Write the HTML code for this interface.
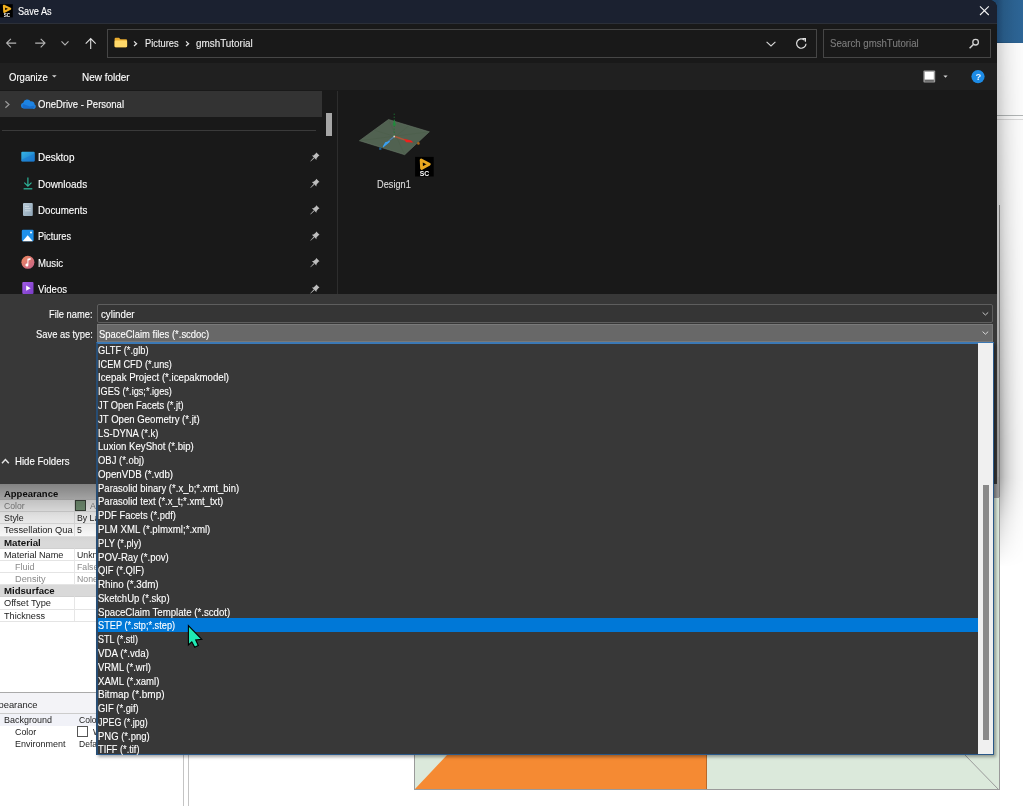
<!DOCTYPE html>
<html lang="en">
<head>
<meta charset="utf-8">
<title>Save As</title>
<style>
html,body{margin:0;padding:0;}
body{width:1023px;height:806px;position:relative;overflow:hidden;background:#fff;font-family:"Liberation Sans",sans-serif;font-size:11px;color:#fff;}
#wrap{position:absolute;left:0;top:0;width:1023px;height:806px;overflow:hidden;filter:blur(.45px);}
.abs{position:absolute;}
.t{position:absolute;white-space:nowrap;line-height:14px;transform-origin:0 0;display:block;-webkit-text-stroke:.12px currentColor;}
/* background app */
#bgblue{left:980px;top:0;width:43px;height:43px;background:linear-gradient(90deg,#1f4870 0%,#1f4870 40%,#275984 55%,#2b6190 80%,#2d6596 100%);}
#bgshadow{left:997px;top:42px;width:26px;height:525px;background:linear-gradient(90deg,rgba(0,0,0,.40) 0%,rgba(0,0,0,.34) 12%,rgba(0,0,0,.22) 30%,rgba(0,0,0,.13) 52%,rgba(0,0,0,.065) 75%,rgba(0,0,0,.03) 100%);-webkit-mask-image:linear-gradient(180deg,rgba(0,0,0,.42) 0%,rgba(0,0,0,.62) 35%,#000 76%,#000 83%,rgba(0,0,0,.45) 91%,transparent 100%);mask-image:linear-gradient(180deg,rgba(0,0,0,.42) 0%,rgba(0,0,0,.62) 35%,#000 76%,#000 83%,rgba(0,0,0,.45) 91%,transparent 100%);}
#bgshadowfade{left:997px;top:115px;width:26px;height:1px;background:#b4b8b8;box-shadow:0 4px 0 #dcdcdc;}
#appline{left:999px;top:205px;width:1px;height:292px;background:#7a7a7a;}
#appstrip{left:994px;top:477px;width:5px;height:20px;background:#9a9a9a;}
#dlgshadow{left:0;top:484px;width:190px;height:58px;background:linear-gradient(180deg,rgba(0,0,0,.40) 0%,rgba(0,0,0,.24) 28%,rgba(0,0,0,.12) 55%,rgba(0,0,0,0) 100%);}
/* properties panel */
.prow{position:absolute;left:0;width:186px;height:12px;border-bottom:1px solid #e4e4e4;box-sizing:border-box;background:#fff;}
.prow.h{background:#d9d9d9;border-bottom:1px solid #d0d0d0;}
.pt{position:absolute;white-space:nowrap;font-size:9.6px;line-height:12px;color:#1a1a1a;}
.pt.b{font-weight:bold;color:#111;}
.pt.g{color:#8c8c8c;}
/* dialog */
#dlg{left:0;top:0;width:997px;height:484px;background:#191919;border-top-right-radius:8px;}
#title{left:0;top:0;width:997px;height:23px;background:#1b2130;border-top-right-radius:8px;}
#navbar{left:0;top:23px;width:997px;height:40px;background:#191919;border-top:1px solid #2b2f38;box-sizing:border-box;}
#toolbar{left:0;top:63px;width:997px;height:27px;background:#202020;}
#addr{left:107px;top:28.5px;width:710px;height:29px;border:1px solid #464646;box-sizing:border-box;}
#search{left:823px;top:28.5px;width:168px;height:29px;border:1px solid #464646;box-sizing:border-box;}
#odrow{left:0;top:91px;width:322px;height:26px;background:#333;}
#navsep{left:2px;top:130px;width:314px;height:1px;background:#3a3a3a;}
#thumb1{left:326px;top:113px;width:6px;height:23px;background:#a6a6a6;}
#vdiv{left:337px;top:91px;width:1px;height:203px;background:#2d2d2d;}
#bottom{left:0;top:294px;width:997px;height:190px;background:#383838;}
#fname{left:97px;top:304px;width:896px;height:19px;border:1px solid #5e5e5e;border-radius:2px;box-sizing:border-box;background:#353535;}
#ftype{left:97px;top:324px;width:896px;height:18px;border:1px solid #7a7a7a;box-sizing:border-box;background:#686868;}
#dd{left:96px;top:341.5px;width:898px;height:413.5px;background:#383838;border:1px solid #2a5888;border-left:2px solid #274d74;border-top:2px solid #3b78b4;box-sizing:border-box;box-shadow:2px 2px 3px rgba(0,0,0,.35);}
#ddtrack{left:978px;top:343px;width:15px;height:411px;background:#f0f0f0;}
#ddthumb{left:983px;top:485px;width:6px;height:255px;background:#8a8a8a;}
#sel{left:98px;top:618px;width:880px;height:14px;background:#0078d7;}
.li{position:absolute;left:98px;white-space:nowrap;font-size:10.4px;line-height:14px;color:#fff;letter-spacing:-0.1px;}
.nv{position:absolute;left:37.5px;white-space:nowrap;font-size:10.6px;line-height:14px;color:#fff;}
</style>
</head>
<body>
<div id="wrap">
<!-- ===== background application ===== -->
<div class="abs" id="bgblue"></div>
<div class="abs" id="bgshadowfade"></div>
<div class="abs" id="bgshadow"></div>
<div class="abs" id="appline"></div>
<div class="abs" id="appstrip"></div>
<svg class="abs" style="left:0;top:0" width="1023" height="806" viewBox="0 0 1023 806">
<rect x="414.5" y="497.5" width="585" height="292" fill="#dbe9db" stroke="#9a9a9a" stroke-width="1"/>
<polygon points="447,755 706.5,755 706.5,789 415,789" fill="#f58a33"/>
<line x1="706.5" y1="755" x2="706.5" y2="789" stroke="#b9692a" stroke-width="1"/>
<line x1="965" y1="755" x2="999" y2="790" stroke="#9a9a9a" stroke-width="1"/>
<rect x="183" y="484" width="1" height="322" fill="#c4c4c4"/>
<rect x="188" y="484" width="1" height="322" fill="#c4c4c4"/>
</svg>


<div class="abs" style="left:0;top:484px;width:186px;height:137px;background:#fff"></div>
<div class="prow h" style="top:484px;height:16px"></div>
<div class="prow " style="top:500px;height:12px"></div>
<div class="prow " style="top:512px;height:12px"></div>
<div class="prow " style="top:524px;height:13px"></div>
<div class="prow h" style="top:537px;height:12px"></div>
<div class="prow " style="top:549px;height:12px"></div>
<div class="prow " style="top:561px;height:12px"></div>
<div class="prow " style="top:573px;height:12px"></div>
<div class="prow h" style="top:585px;height:12px"></div>
<div class="prow " style="top:597px;height:13px"></div>
<div class="prow " style="top:610px;height:12px"></div>
<div class="abs" style="left:74px;top:500px;width:1px;height:121px;background:#e6e6e6"></div>
<div class="abs" style="left:74px;top:488px;width:1px;height:12px;background:#d9d9d9"></div>
<div class="abs" style="left:74px;top:537px;width:1px;height:12px;background:#d9d9d9"></div>
<div class="abs" style="left:74px;top:585px;width:1px;height:12px;background:#d9d9d9"></div>
<div class="abs" style="left:75px;top:500px;width:11px;height:11px;box-sizing:border-box;border:1px solid #3c463c;background:#7b9b7c"></div>
<div class="abs" style="left:0;top:692px;width:184px;height:1px;background:#aaa"></div>
<div class="abs" style="left:0;top:693px;width:184px;height:20px;background:#f3f3f7"></div>
<div class="abs" style="left:0;top:713px;width:184px;height:1px;background:#ccc"></div>
<div class="abs" style="left:0;top:714px;width:184px;height:12px;background:#f1f2f8"></div>
<div class="abs" style="left:77px;top:726px;width:11px;height:11px;box-sizing:border-box;border:1px solid #555;background:#fff"></div>
<span class="t" style="left:4.0px;top:487.01px;font-size:9.2px;color:#111;transform:scaleX(1.0302);font-weight:bold;-webkit-text-stroke:0;">Appearance</span>
<span class="t" style="left:4.0px;top:499.16px;font-size:9.2px;color:#8a8a8a;transform:scaleX(0.9422);-webkit-text-stroke:0;">Color</span>
<span class="t" style="left:4.0px;top:511.31px;font-size:9.2px;color:#1c1c1c;transform:scaleX(0.9688);-webkit-text-stroke:0;">Style</span>
<span class="t" style="left:4.0px;top:523.46px;font-size:9.2px;color:#1c1c1c;transform:scaleX(1.0112);-webkit-text-stroke:0;">Tessellation Qua</span>
<span class="t" style="left:4.0px;top:535.61px;font-size:9.2px;color:#111;transform:scaleX(1.0595);font-weight:bold;-webkit-text-stroke:0;">Material</span>
<span class="t" style="left:4.0px;top:547.76px;font-size:9.2px;color:#1c1c1c;transform:scaleX(0.9941);-webkit-text-stroke:0;">Material Name</span>
<span class="t" style="left:15.4px;top:559.91px;font-size:9.2px;color:#8a8a8a;transform:scaleX(0.9838);-webkit-text-stroke:0;">Fluid</span>
<span class="t" style="left:15.4px;top:572.06px;font-size:9.2px;color:#8a8a8a;transform:scaleX(1.0019);-webkit-text-stroke:0;">Density</span>
<span class="t" style="left:4.0px;top:584.21px;font-size:9.2px;color:#111;transform:scaleX(1.0450);font-weight:bold;-webkit-text-stroke:0;">Midsurface</span>
<span class="t" style="left:4.0px;top:596.36px;font-size:9.2px;color:#1c1c1c;transform:scaleX(1.0074);-webkit-text-stroke:0;">Offset Type</span>
<span class="t" style="left:4.0px;top:608.51px;font-size:9.2px;color:#1c1c1c;transform:scaleX(0.9913);-webkit-text-stroke:0;">Thickness</span>
<span class="t" style="left:90.0px;top:499.16px;font-size:9.2px;color:#8a8a8a;transform:scaleX(0.9500);-webkit-text-stroke:0;">Automatic</span>
<span class="t" style="left:76.5px;top:511.31px;font-size:9.2px;color:#1c1c1c;transform:scaleX(0.9500);-webkit-text-stroke:0;">By Layer</span>
<span class="t" style="left:76.5px;top:523.46px;font-size:9.2px;color:#1c1c1c;transform:scaleX(0.9500);-webkit-text-stroke:0;">5</span>
<span class="t" style="left:76.5px;top:547.76px;font-size:9.2px;color:#1c1c1c;transform:scaleX(0.9500);-webkit-text-stroke:0;">Unknown Material</span>
<span class="t" style="left:76.5px;top:559.91px;font-size:9.2px;color:#8a8a8a;transform:scaleX(0.9500);-webkit-text-stroke:0;">False</span>
<span class="t" style="left:76.5px;top:572.06px;font-size:9.2px;color:#8a8a8a;transform:scaleX(0.9500);-webkit-text-stroke:0;">None</span>
<span class="t" style="left:-13.0px;top:698.21px;font-size:9.2px;color:#222;transform:scaleX(1.0200);-webkit-text-stroke:0;">Appearance</span>
<span class="t" style="left:3.6px;top:713.01px;font-size:9.2px;color:#222;transform:scaleX(0.9766);-webkit-text-stroke:0;">Background</span>
<span class="t" style="left:14.8px;top:725.01px;font-size:9.2px;color:#222;transform:scaleX(0.9650);-webkit-text-stroke:0;">Color</span>
<span class="t" style="left:14.8px;top:737.11px;font-size:9.2px;color:#222;transform:scaleX(0.9791);-webkit-text-stroke:0;">Environment</span>
<span class="t" style="left:78.5px;top:713.01px;font-size:9.2px;color:#222;transform:scaleX(0.9300);-webkit-text-stroke:0;">Color</span>
<span class="t" style="left:92.5px;top:725.01px;font-size:9.2px;color:#222;transform:scaleX(0.9300);-webkit-text-stroke:0;">White</span>
<span class="t" style="left:78.5px;top:737.11px;font-size:9.2px;color:#222;transform:scaleX(0.9300);-webkit-text-stroke:0;">Default</span>
<div class="abs" id="dlgshadow"></div>
<!-- ===== dialog ===== -->
<div class="abs" id="dlg"></div>
<div class="abs" id="title"></div>
<div class="abs" id="navbar"></div>
<div class="abs" id="toolbar"></div>
<div class="abs" id="addr"></div>
<div class="abs" id="search"></div>
<svg class="abs" style="left:0;top:0" width="1000" height="92" viewBox="0 0 1000 92" fill="none">
<!-- app logo -->
<rect x="0" y="4.2" width="12.8" height="13.2" fill="#000"/>
<path d="M3.9 5.7 L10.2 8.8 L4.3 11.9 Z" stroke="#f2b01e" stroke-width="2.1" stroke-linejoin="round" fill="#000"/>
<text x="3.8" y="17.4" font-family="Liberation Sans, sans-serif" font-weight="bold" font-size="5.6" fill="#fff" textLength="6.4" lengthAdjust="spacingAndGlyphs">SC</text>
<!-- close -->
<path d="M980 6.4 L988.8 15 M988.8 6.4 L980 15" stroke="#f2f2f2" stroke-width="1.1"/>
<!-- back -->
<path d="M16.2 43.1 H6.6 M10.9 38.9 L6.6 43.1 L10.9 47.4" stroke="#b4b4b4" stroke-width="1.1"/>
<!-- forward -->
<path d="M35.2 43.1 H45 M40.7 38.9 L45 43.1 L40.7 47.4" stroke="#b4b4b4" stroke-width="1.1"/>
<!-- recent chevron -->
<path d="M61.5 41.3 L65 44.9 L68.5 41.3" stroke="#b4b4b4" stroke-width="1.1"/>
<!-- up -->
<path d="M90.7 49 V38.6 M85.7 43.6 L90.7 38.6 L95.7 43.6" stroke="#e0e0e0" stroke-width="1.1"/>
<!-- folder -->
<path d="M114.6 39 q0-1.2 1.2-1.2 h3.2 l1.4 1.4 h5.6 q1.1 0 1.1 1.1 v5.9 q0 1.1-1.1 1.1 h-10.2 q-1.2 0-1.2-1.1z" fill="#e9ab2e"/>
<path d="M114.6 41.4 q0-1 1-1 h10.5 q1 0 1 1 v4.8 q0 1.1-1.1 1.1 h-10.2 q-1.2 0-1.2-1.1z" fill="#ffd96a"/>
<!-- breadcrumb chevrons -->
<path d="M134 41.4 L136.6 43.7 L134 46" stroke="#e6e6e6" stroke-width="1.2"/>
<path d="M186 41.4 L188.6 43.7 L186 46" stroke="#e6e6e6" stroke-width="1.2"/>
<!-- address dropdown chevron -->
<path d="M766.6 41.8 L771 46 L775.4 41.8" stroke="#d8d8d8" stroke-width="1.1"/>
<!-- refresh -->
<path d="M804.6 40.2 A4.7 4.7 0 1 0 806 43.7" stroke="#e0e0e0" stroke-width="1.2"/>
<path d="M802.3 38.6 H805.4 V41.7" stroke="#e0e0e0" stroke-width="1.2"/>
<!-- search magnifier -->
<circle cx="975.6" cy="42.2" r="2.8" stroke="#d0d0d0" stroke-width="1.3"/>
<path d="M973.6 44.3 L969.6 48.3" stroke="#d0d0d0" stroke-width="1.5"/>
<!-- organize caret -->
<path d="M52 75.2 H56.6 L54.3 77.6 Z" fill="#d6d6d6"/>
<!-- view icon -->
<rect x="923.4" y="70.4" width="11.8" height="12.2" rx="1" fill="#9b9b9b"/>
<rect x="924.8" y="71.8" width="9" height="7.6" fill="#fff"/>
<rect x="924.8" y="80.4" width="9" height="1" fill="#4a4a4a"/>
<path d="M943.4 75.6 H947.6 L945.5 77.8 Z" fill="#d6d6d6"/>
<!-- help -->
<circle cx="978" cy="76.6" r="6.6" fill="#1c8be6"/>
<text x="975.6" y="80.2" font-family="Liberation Sans, sans-serif" font-weight="bold" font-size="9.5" fill="#e9f4ff">?</text>
</svg>

<span class="t" style="left:17.9px;top:4.26px;font-size:10.8px;color:#fff;transform:scaleX(0.8479);">Save As</span>
<span class="t" style="left:8.8px;top:69.86px;font-size:10.8px;color:#fff;transform:scaleX(0.8833);">Organize</span>
<span class="t" style="left:81.5px;top:69.86px;font-size:10.8px;color:#fff;transform:scaleX(0.9204);">New folder</span>
<span class="t" style="left:144.5px;top:35.86px;font-size:10.8px;color:#ececec;transform:scaleX(0.8612);">Pictures</span>
<span class="t" style="left:196.4px;top:35.86px;font-size:10.8px;color:#ececec;transform:scaleX(0.9159);">gmshTutorial</span>
<span class="t" style="left:829.9px;top:36.46px;font-size:10.8px;color:#7d7d7d;transform:scaleX(0.8940);">Search gmshTutorial</span>
<div class="abs" id="odrow"></div>
<div class="abs" id="navsep"></div>
<div class="abs" id="thumb1"></div>
<div class="abs" id="vdiv"></div>
<svg class="abs" style="left:0;top:91px" width="338" height="203" viewBox="0 91 338 203" fill="none">
<!-- expand chevron -->
<path d="M5.4 101.2 L9 104.5 L5.4 107.8" stroke="#9a9a9a" stroke-width="1.2"/>
<!-- onedrive cloud -->
<path d="M23.6 108.6 a3 3 0 0 1 -0.4 -5.9 a4.2 4.2 0 0 1 7.6 -1.3 a3.2 3.2 0 0 1 3.8 3.2 a2.2 2.2 0 0 1 -2 4 z" fill="#1d84e4"/>
<path d="M24 108.6 a2.8 2.8 0 0 1 -0.6 -4.6 l6.4 2.6 l4.4 -1 a2.2 2.2 0 0 1 -1.6 3 z" fill="#1669c9" opacity=".8"/>
<!-- desktop -->
<defs><linearGradient id="gd" x1="0" y1="0" x2="1" y2="1"><stop offset="0" stop-color="#35b5e6"/><stop offset="1" stop-color="#1a74c8"/></linearGradient>
<linearGradient id="gdoc" x1="0" y1="0" x2="1" y2="1"><stop offset="0" stop-color="#b9cad6"/><stop offset="1" stop-color="#8fa6b8"/></linearGradient>
<linearGradient id="gmu" x1="0" y1="0" x2="1" y2="1"><stop offset="0" stop-color="#ee8a5e"/><stop offset="1" stop-color="#c6628a"/></linearGradient>
<linearGradient id="gvi" x1="0" y1="0" x2="1" y2="1"><stop offset="0" stop-color="#a25ce6"/><stop offset="1" stop-color="#7a3cc8"/></linearGradient></defs>
<rect x="21.3" y="151.8" width="13.4" height="9.8" rx="1" fill="url(#gd)"/>
<path d="M22 159.6 L34.7 153.4 V160.6 q0 1 -1 1 H22.3 q-1 0 -1 -1z" fill="#1a78cf" opacity=".55"/>
<!-- downloads -->
<path d="M27.9 177.4 V186 M24.3 182.6 L27.9 186.1 L31.5 182.6" stroke="#2db398" stroke-width="1.2"/>
<path d="M23.6 188.8 H32.3" stroke="#2db398" stroke-width="1.3"/>
<!-- documents -->
<rect x="23" y="203" width="9.8" height="13" rx="1" fill="url(#gdoc)"/>
<path d="M25 206.4 H29 M25 208.6 H30.6 M25 210.8 H30.6" stroke="#dfe8ee" stroke-width=".8" opacity=".8"/>
<!-- pictures -->
<rect x="21.8" y="229.8" width="11.8" height="11.4" rx="1.2" fill="#1e90ea"/>
<path d="M22.6 241.2 L27.7 235.2 L32.8 241.2 Z" fill="#fff"/>
<circle cx="31" cy="232.4" r="1" fill="#fff"/>
<!-- music -->
<circle cx="27.9" cy="262.3" r="6.5" fill="url(#gmu)"/>
<path d="M27.4 265 V258.8 L30.6 258 V259.8 L28.4 260.4 V265 a1.5 1.5 0 1 1 -1 -1.4" fill="#fff"/>
<!-- videos -->
<rect x="22.3" y="282" width="11.2" height="12" rx="1" fill="url(#gvi)"/>
<path d="M26.2 285.6 L30.6 288.2 L26.2 290.8 Z" fill="#fff"/>
<!-- pins -->
<g id="pin" fill="#bdbdbd"><path d="M316.3 152.4 L319.5 155.6 L318.3 156.2 L316.5 158.4 L316.4 160 L311.9 155.5 L313.5 155.4 L315.7 153.6 Z"/><path d="M313.6 157.6 L314.3 158.3 L310.6 161.6 L310.3 161.3 Z"/></g>
<use href="#pin" y="26.4"/><use href="#pin" y="52.8"/><use href="#pin" y="79.2"/><use href="#pin" y="105.6"/><use href="#pin" y="132"/>
</svg>

<span class="t" style="left:37.5px;top:97.06px;font-size:10.8px;color:#fff;transform:scaleX(0.8792);">OneDrive - Personal</span>
<span class="t" style="left:37.7px;top:150.26px;font-size:10.8px;color:#fff;transform:scaleX(0.9190);">Desktop</span>
<span class="t" style="left:37.7px;top:176.66px;font-size:10.8px;color:#fff;transform:scaleX(0.9191);">Downloads</span>
<span class="t" style="left:37.7px;top:203.06px;font-size:10.8px;color:#fff;transform:scaleX(0.9028);">Documents</span>
<span class="t" style="left:37.7px;top:229.46px;font-size:10.8px;color:#fff;transform:scaleX(0.8458);">Pictures</span>
<span class="t" style="left:37.7px;top:255.86px;font-size:10.8px;color:#fff;transform:scaleX(0.8900);">Music</span>
<span class="t" style="left:37.7px;top:282.26px;font-size:10.8px;color:#fff;transform:scaleX(0.8834);">Videos</span>
<svg class="abs" style="left:350px;top:105px" width="90" height="75" viewBox="350 105 90 75" fill="none">
<polygon points="359.5,140.7 388.5,119.5 429.3,131.8 404.7,154.7" fill="#516251" stroke="#667566" stroke-width=".6"/>
<path d="M359.5 140.7 L429.3 131.8 M388.5 119.5 L404.7 154.7 M374 130.1 L417 143.2 M408.9 125.6 L382.1 147.7" stroke="#4b5e4a" stroke-width=".6"/>
<!-- green axis -->
<path d="M394.2 136 V112" stroke="#1d7a34" stroke-width=".8" stroke-dasharray="1.4 1.6"/>
<path d="M394.3 119.4 L396 125.6 H392.6 Z" fill="#1f8c3b"/>
<!-- red axis -->
<path d="M395 136.6 L405 140" stroke="#a8563a" stroke-width="1.6"/>
<path d="M404 138.8 L411.2 140.4 L413.4 142.6 L406 142.2 Z" fill="#f0201c"/>
<!-- blue axis -->
<path d="M393.6 137 L388 141.6" stroke="#4f7fb0" stroke-width="1.2"/>
<path d="M389.4 141.6 L383.4 146.6 L385.6 142.8 Z" fill="#3aa0f4" stroke="#3aa0f4" stroke-width="1.2" stroke-linejoin="round"/>
<rect x="379.2" y="147.4" width="2.2" height="2.4" fill="#1f5f8f"/>
<circle cx="418.4" cy="143.4" r="1.3" fill="#a8661c"/>
<circle cx="394.2" cy="136.5" r=".9" fill="#d8d8c8"/>
<!-- SC badge -->
<rect x="415.1" y="156.9" width="18.6" height="19.6" fill="#000"/>
<path d="M421.2 160 L429.3 164.2 L421.6 168.4 Z" stroke="#e9a820" stroke-width="2.9" stroke-linejoin="round" fill="#000"/>
<text x="419.8" y="176" font-family="Liberation Sans, sans-serif" font-weight="bold" font-size="6.8" fill="#fff" textLength="9.4" lengthAdjust="spacingAndGlyphs">SC</text>
</svg>

<span class="t" style="left:377.4px;top:176.66px;font-size:10.8px;color:#dcdcdc;transform:scaleX(0.8530);">Design1</span>
<div class="abs" id="bottom"></div>
<div class="abs" id="fname"></div>
<div class="abs" id="ftype"></div>
<svg class="abs" style="left:0;top:294px" width="997" height="190" viewBox="0 294 997 190" fill="none">
<path d="M982.6 312.4 L985.4 315 L988.2 312.4" stroke="#c8c8c8" stroke-width="1"/>
<path d="M982.6 331.6 L985.4 334.2 L988.2 331.6" stroke="#d8d8d8" stroke-width="1"/>
<path d="M2 463.2 L5.4 459.6 L8.8 463.2" stroke="#e4e4e4" stroke-width="1.5"/>
</svg>

<span class="t" style="left:49.0px;top:306.76px;font-size:10.8px;color:#fff;transform:scaleX(0.8630);">File name:</span>
<span class="t" style="left:35.7px;top:326.86px;font-size:10.8px;color:#fff;transform:scaleX(0.8682);">Save as type:</span>
<span class="t" style="left:101.0px;top:306.76px;font-size:10.8px;color:#fff;transform:scaleX(0.9028);">cylinder</span>
<span class="t" style="left:99.0px;top:326.86px;font-size:10.8px;color:#fff;transform:scaleX(0.8745);">SpaceClaim files (*.scdoc)</span>
<span class="t" style="left:14.5px;top:454.06px;font-size:10.8px;color:#fff;transform:scaleX(0.8919);">Hide Folders</span>
<div class="abs" id="dd"></div>
<div class="abs" id="ddtrack"></div>
<div class="abs" id="ddthumb"></div>
<div class="abs" id="sel"></div>

<span class="t" style="left:98.1px;top:342.86px;font-size:10.8px;color:#fff;transform:scaleX(0.8619);">GLTF (*.glb)</span>
<span class="t" style="left:98.1px;top:356.64px;font-size:10.8px;color:#fff;transform:scaleX(0.8496);">ICEM CFD (*.uns)</span>
<span class="t" style="left:98.1px;top:370.42px;font-size:10.8px;color:#fff;transform:scaleX(0.8946);">Icepak Project (*.icepakmodel)</span>
<span class="t" style="left:98.1px;top:384.20px;font-size:10.8px;color:#fff;transform:scaleX(0.8493);">IGES (*.igs;*.iges)</span>
<span class="t" style="left:98.1px;top:397.98px;font-size:10.8px;color:#fff;transform:scaleX(0.8621);">JT Open Facets (*.jt)</span>
<span class="t" style="left:98.1px;top:411.76px;font-size:10.8px;color:#fff;transform:scaleX(0.8889);">JT Open Geometry (*.jt)</span>
<span class="t" style="left:98.1px;top:425.54px;font-size:10.8px;color:#fff;transform:scaleX(0.8739);">LS-DYNA (*.k)</span>
<span class="t" style="left:98.1px;top:439.32px;font-size:10.8px;color:#fff;transform:scaleX(0.8917);">Luxion KeyShot (*.bip)</span>
<span class="t" style="left:98.1px;top:453.10px;font-size:10.8px;color:#fff;transform:scaleX(0.8748);">OBJ (*.obj)</span>
<span class="t" style="left:98.1px;top:466.88px;font-size:10.8px;color:#fff;transform:scaleX(0.9002);">OpenVDB (*.vdb)</span>
<span class="t" style="left:98.1px;top:480.66px;font-size:10.8px;color:#fff;transform:scaleX(0.8812);">Parasolid binary (*.x_b;*.xmt_bin)</span>
<span class="t" style="left:98.1px;top:494.44px;font-size:10.8px;color:#fff;transform:scaleX(0.8803);">Parasolid text (*.x_t;*.xmt_txt)</span>
<span class="t" style="left:98.1px;top:508.22px;font-size:10.8px;color:#fff;transform:scaleX(0.8713);">PDF Facets (*.pdf)</span>
<span class="t" style="left:98.1px;top:522.00px;font-size:10.8px;color:#fff;transform:scaleX(0.8943);">PLM XML (*.plmxml;*.xml)</span>
<span class="t" style="left:98.1px;top:535.78px;font-size:10.8px;color:#fff;transform:scaleX(0.8575);">PLY (*.ply)</span>
<span class="t" style="left:98.1px;top:549.56px;font-size:10.8px;color:#fff;transform:scaleX(0.8871);">POV-Ray (*.pov)</span>
<span class="t" style="left:98.1px;top:563.34px;font-size:10.8px;color:#fff;transform:scaleX(0.8653);">QIF (*.QIF)</span>
<span class="t" style="left:98.1px;top:577.12px;font-size:10.8px;color:#fff;transform:scaleX(0.9098);">Rhino (*.3dm)</span>
<span class="t" style="left:98.1px;top:590.90px;font-size:10.8px;color:#fff;transform:scaleX(0.8838);">SketchUp (*.skp)</span>
<span class="t" style="left:98.1px;top:604.68px;font-size:10.8px;color:#fff;transform:scaleX(0.8931);">SpaceClaim Template (*.scdot)</span>
<span class="t" style="left:98.1px;top:618.46px;font-size:10.8px;color:#fff;transform:scaleX(0.8527);">STEP (*.stp;*.step)</span>
<span class="t" style="left:98.1px;top:632.24px;font-size:10.8px;color:#fff;transform:scaleX(0.8383);">STL (*.stl)</span>
<span class="t" style="left:98.1px;top:646.02px;font-size:10.8px;color:#fff;transform:scaleX(0.9024);">VDA (*.vda)</span>
<span class="t" style="left:98.1px;top:659.80px;font-size:10.8px;color:#fff;transform:scaleX(0.8703);">VRML (*.wrl)</span>
<span class="t" style="left:98.1px;top:673.58px;font-size:10.8px;color:#fff;transform:scaleX(0.8872);">XAML (*.xaml)</span>
<span class="t" style="left:98.1px;top:687.36px;font-size:10.8px;color:#fff;transform:scaleX(0.9236);">Bitmap (*.bmp)</span>
<span class="t" style="left:98.1px;top:701.14px;font-size:10.8px;color:#fff;transform:scaleX(0.8697);">GIF (*.gif)</span>
<span class="t" style="left:98.1px;top:714.92px;font-size:10.8px;color:#fff;transform:scaleX(0.8283);">JPEG (*.jpg)</span>
<span class="t" style="left:98.1px;top:728.70px;font-size:10.8px;color:#fff;transform:scaleX(0.8791);">PNG (*.png)</span>
<span class="t" style="left:98.1px;top:742.48px;font-size:10.8px;color:#fff;transform:scaleX(0.8543);">TIFF (*.tif)</span>
<svg class="abs" style="left:180px;top:618px" width="30" height="36" viewBox="180 618 30 36">
<polygon points="188.4,625.6 188.4,645 191.8,641.8 194.7,647.3 198.3,645.4 195.7,640 201.8,639.4" fill="#1fe9b4" stroke="#000" stroke-width="1.1" stroke-linejoin="miter"/>
</svg>


</div>
</body>
</html>
